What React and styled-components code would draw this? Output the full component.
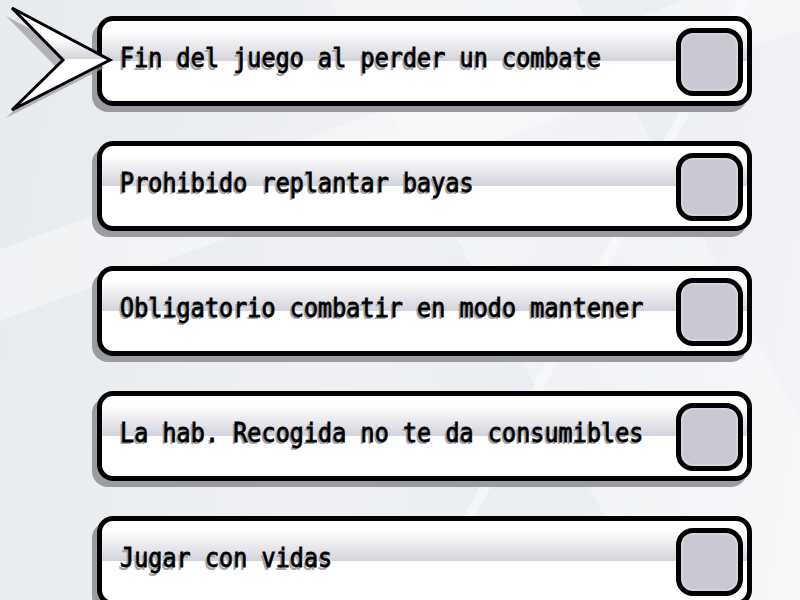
import styled, { createGlobalStyle } from "styled-components";

const options = [
  "Fin del juego al perder un combate",
  "Prohibido replantar bayas",
  "Obligatorio combatir en modo mantener",
  "La hab. Recogida no te da consumibles",
  "Jugar con vidas",
];

const GlobalStyle = createGlobalStyle`
  html, body {
    margin: 0;
    padding: 0;
    width: 800px;
    height: 600px;
    overflow: hidden;
  }
  body {
    font-family: "DejaVu Sans Mono", "Liberation Mono", monospace;
    background: #eceef2;
  }
`;

export default function App() {
  return (
    <>
      <GlobalStyle />
      <Screen>
        <Cursor />
        <List>
          {options.map((text) => (
            <Option key={text}>
              <Label>{text}</Label>
              <Check />
            </Option>
          ))}
        </List>
      </Screen>
    </>
  );
}

function Cursor() {
  return (
    <Pointer width="120" height="125" viewBox="0 0 120 125">
      <defs>
        <linearGradient id="arrowFill" x1="0" y1="0" x2="0" y2="1">
          <stop offset="0" stopColor="#ffffff" />
          <stop offset="0.3" stopColor="#ffffff" />
          <stop offset="0.5" stopColor="#d2d2da" />
          <stop offset="0.5" stopColor="#ffffff" />
          <stop offset="1" stopColor="#ffffff" />
        </linearGradient>
      </defs>
      <polygon points="6,16 104,68 6,118 57,68" fill="#9a9aa0" opacity="0.7" />
      <polygon
        points="12,8 110,60 12,110 63,60"
        fill="url(#arrowFill)"
        stroke="#000"
        strokeWidth="3"
        strokeLinejoin="miter"
      />
    </Pointer>
  );
}

const Screen = styled.div`
  position: relative;
  width: 800px;
  height: 600px;
  overflow: hidden;
  background:
    linear-gradient(118deg, transparent 0 66%, rgba(255, 255, 255, 0.45) 66% 67%, transparent 67%),
    linear-gradient(160deg, transparent 0 28%, rgba(255, 255, 255, 0.35) 28% 36%, transparent 36%),
    linear-gradient(62deg, transparent 0 58%, rgba(255, 255, 255, 0.3) 58% 80%, transparent 80%),
    linear-gradient(100deg, #e7eaee 0%, #eff1f4 45%, #eaedf1 70%, #f4f5f8 100%);
`;

const Pointer = styled.svg`
  position: absolute;
  left: 0;
  top: 0;
  z-index: 2;
`;

const List = styled.div`
  display: flex;
  flex-direction: column;
  gap: 35px;
  padding: 16px 0 0 97px;
`;

const Option = styled.div`
  box-sizing: border-box;
  width: 655px;
  height: 90px;
  flex-shrink: 0;
  display: flex;
  align-items: center;
  justify-content: space-between;
  padding: 0 4px 0 18px;
  border: 5px solid #000;
  border-radius: 16px;
  background: linear-gradient(
    to bottom,
    #ffffff 0%,
    #ffffff 12%,
    #d3d3dc 50%,
    #ffffff 50.5%,
    #ffffff 100%
  );
  box-shadow: -5px 6px 0 #9b9ba2;
`;

const Label = styled.span`
  display: inline-block;
  font-size: 23.5px;
  font-weight: normal;
  color: #000;
  -webkit-text-stroke: 0.7px #000;
  white-space: nowrap;
  transform: scaleY(1.15);
  margin-top: -6px;
  text-shadow: -2px 2px 0 #a4a4ac;
`;

const Check = styled.div`
  box-sizing: border-box;
  width: 67px;
  height: 68px;
  margin-top: 2px;
  border: 5px solid #000;
  border-radius: 17px;
  background: #c9c9d3;
  box-shadow: inset 0 0 0 2px #d4d4dc;
`;
